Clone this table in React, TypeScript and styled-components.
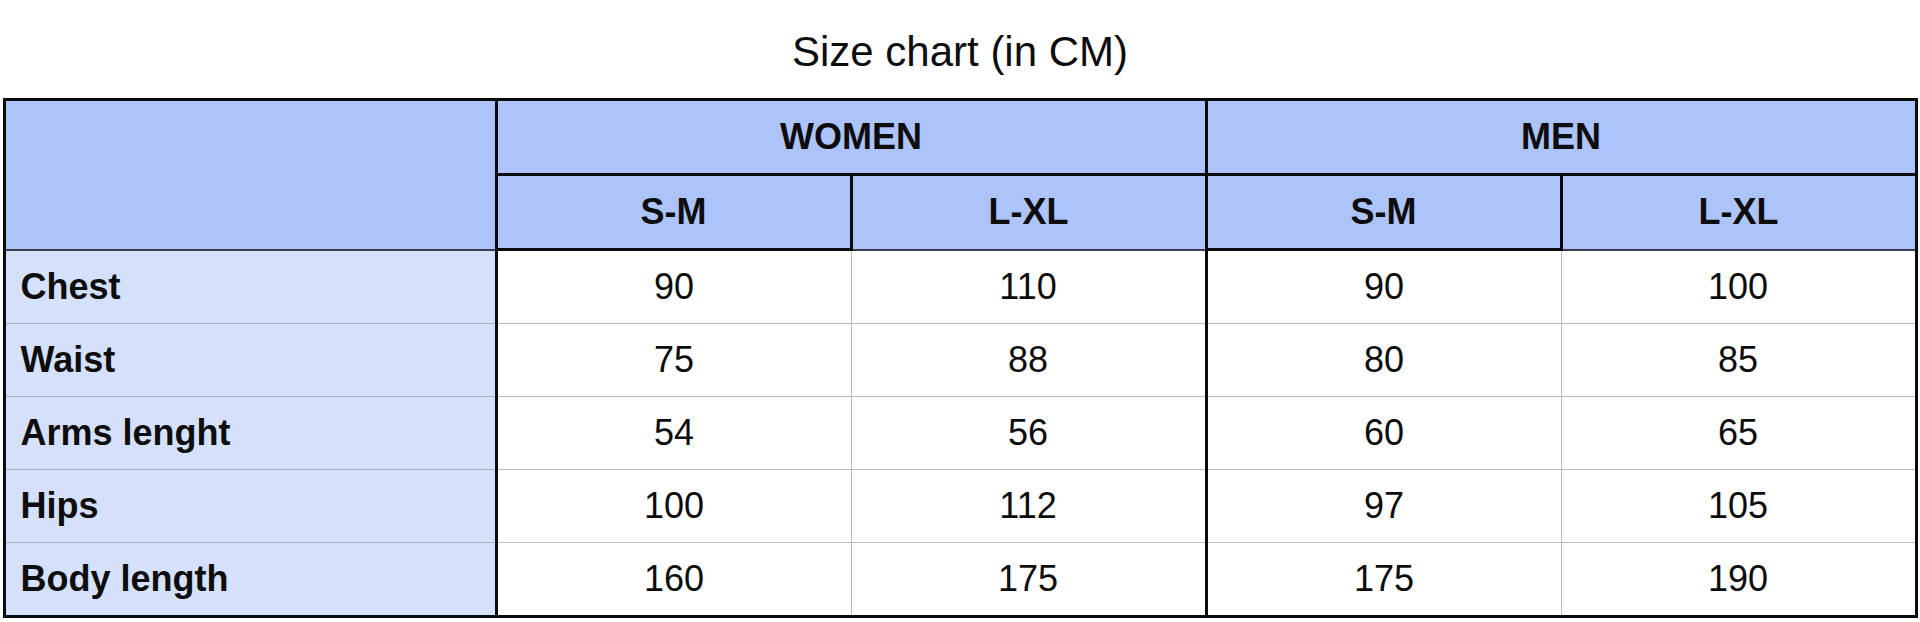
import React from "react";
import styled, { createGlobalStyle } from "styled-components";

const GlobalStyle = createGlobalStyle`
  html, body {
    margin: 0;
    padding: 0;
    background: #ffffff;
  }
  body {
    font-family: "Liberation Sans", Arial, Helvetica, sans-serif;
    color: #0d0d0d;
  }
`;

const HEADER_BLUE = "#adc4fa";
const LABEL_BLUE = "#d5e0fb";
const THICK = "3px solid #0a0a0f";
const THIN = "1px solid #bcbcbc";

const Page = styled.main`
  display: flex;
  flex-direction: column;
  align-items: center;
  padding: 0 4px;
`;

const Title = styled.h1`
  margin: 0;
  padding: 31px 0 25px;
  font-size: 42px;
  line-height: 42px;
  font-weight: 400;
  color: #0d0d0d;
`;

const Table = styled.table`
  width: 100%;
  table-layout: fixed;
  border-collapse: collapse;
  border: ${THICK};
  font-size: 36px;
`;

const HeadCell = styled.th<{ $right?: boolean; $bottom?: "thick" | "dark" }>`
  height: 72px;
  padding: 0;
  background: ${HEADER_BLUE};
  font-weight: 700;
  text-align: center;
  vertical-align: middle;
  border-right: ${(p) => (p.$right ? THICK : "none")};
  border-bottom: ${(p) =>
    p.$bottom === "thick" ? THICK : "2px solid #3a3f4c"};
`;

const Corner = styled(HeadCell)`
  border-right: ${THICK};
`;

const LabelCell = styled.th`
  height: 72px;
  padding: 0 0 0 15px;
  background: ${LABEL_BLUE};
  font-weight: 700;
  text-align: left;
  vertical-align: middle;
  border-right: ${THICK};
  border-bottom: 1px solid #a9afbd;
`;

const ValueCell = styled.td<{ $groupEnd?: boolean }>`
  height: 72px;
  padding: 0;
  text-align: center;
  vertical-align: middle;
  font-weight: 400;
  border-bottom: ${THIN};
  border-right: ${(p) => (p.$groupEnd ? THICK : THIN)};
`;

const rows: [string, number[]][] = [
  ["Chest", [90, 110, 90, 100]],
  ["Waist", [75, 88, 80, 85]],
  ["Arms lenght", [54, 56, 60, 65]],
  ["Hips", [100, 112, 97, 105]],
  ["Body length", [160, 175, 175, 190]],
];

export default function App() {
  return (
    <>
      <GlobalStyle />
      <Page>
        <Title>Size chart (in CM)</Title>
        <Table>
          <colgroup>
            <col style={{ width: 492 }} />
            <col style={{ width: 355 }} />
            <col style={{ width: 355 }} />
            <col style={{ width: 355 }} />
            <col style={{ width: 355 }} />
          </colgroup>
          <thead>
            <tr>
              <Corner rowSpan={2} />
              <HeadCell colSpan={2} $right $bottom="thick">
                WOMEN
              </HeadCell>
              <HeadCell colSpan={2} $right $bottom="thick">
                MEN
              </HeadCell>
            </tr>
            <tr>
              <HeadCell $right $bottom="thick">
                S-M
              </HeadCell>
              <HeadCell $right>L-XL</HeadCell>
              <HeadCell $right $bottom="thick">
                S-M
              </HeadCell>
              <HeadCell $right>L-XL</HeadCell>
            </tr>
          </thead>
          <tbody>
            {rows.map(([label, values]) => (
              <tr key={label}>
                <LabelCell>{label}</LabelCell>
                {values.map((v, i) => (
                  <ValueCell key={i} $groupEnd={i === 1 || i === 3}>
                    {v}
                  </ValueCell>
                ))}
              </tr>
            ))}
          </tbody>
        </Table>
      </Page>
    </>
  );
}
